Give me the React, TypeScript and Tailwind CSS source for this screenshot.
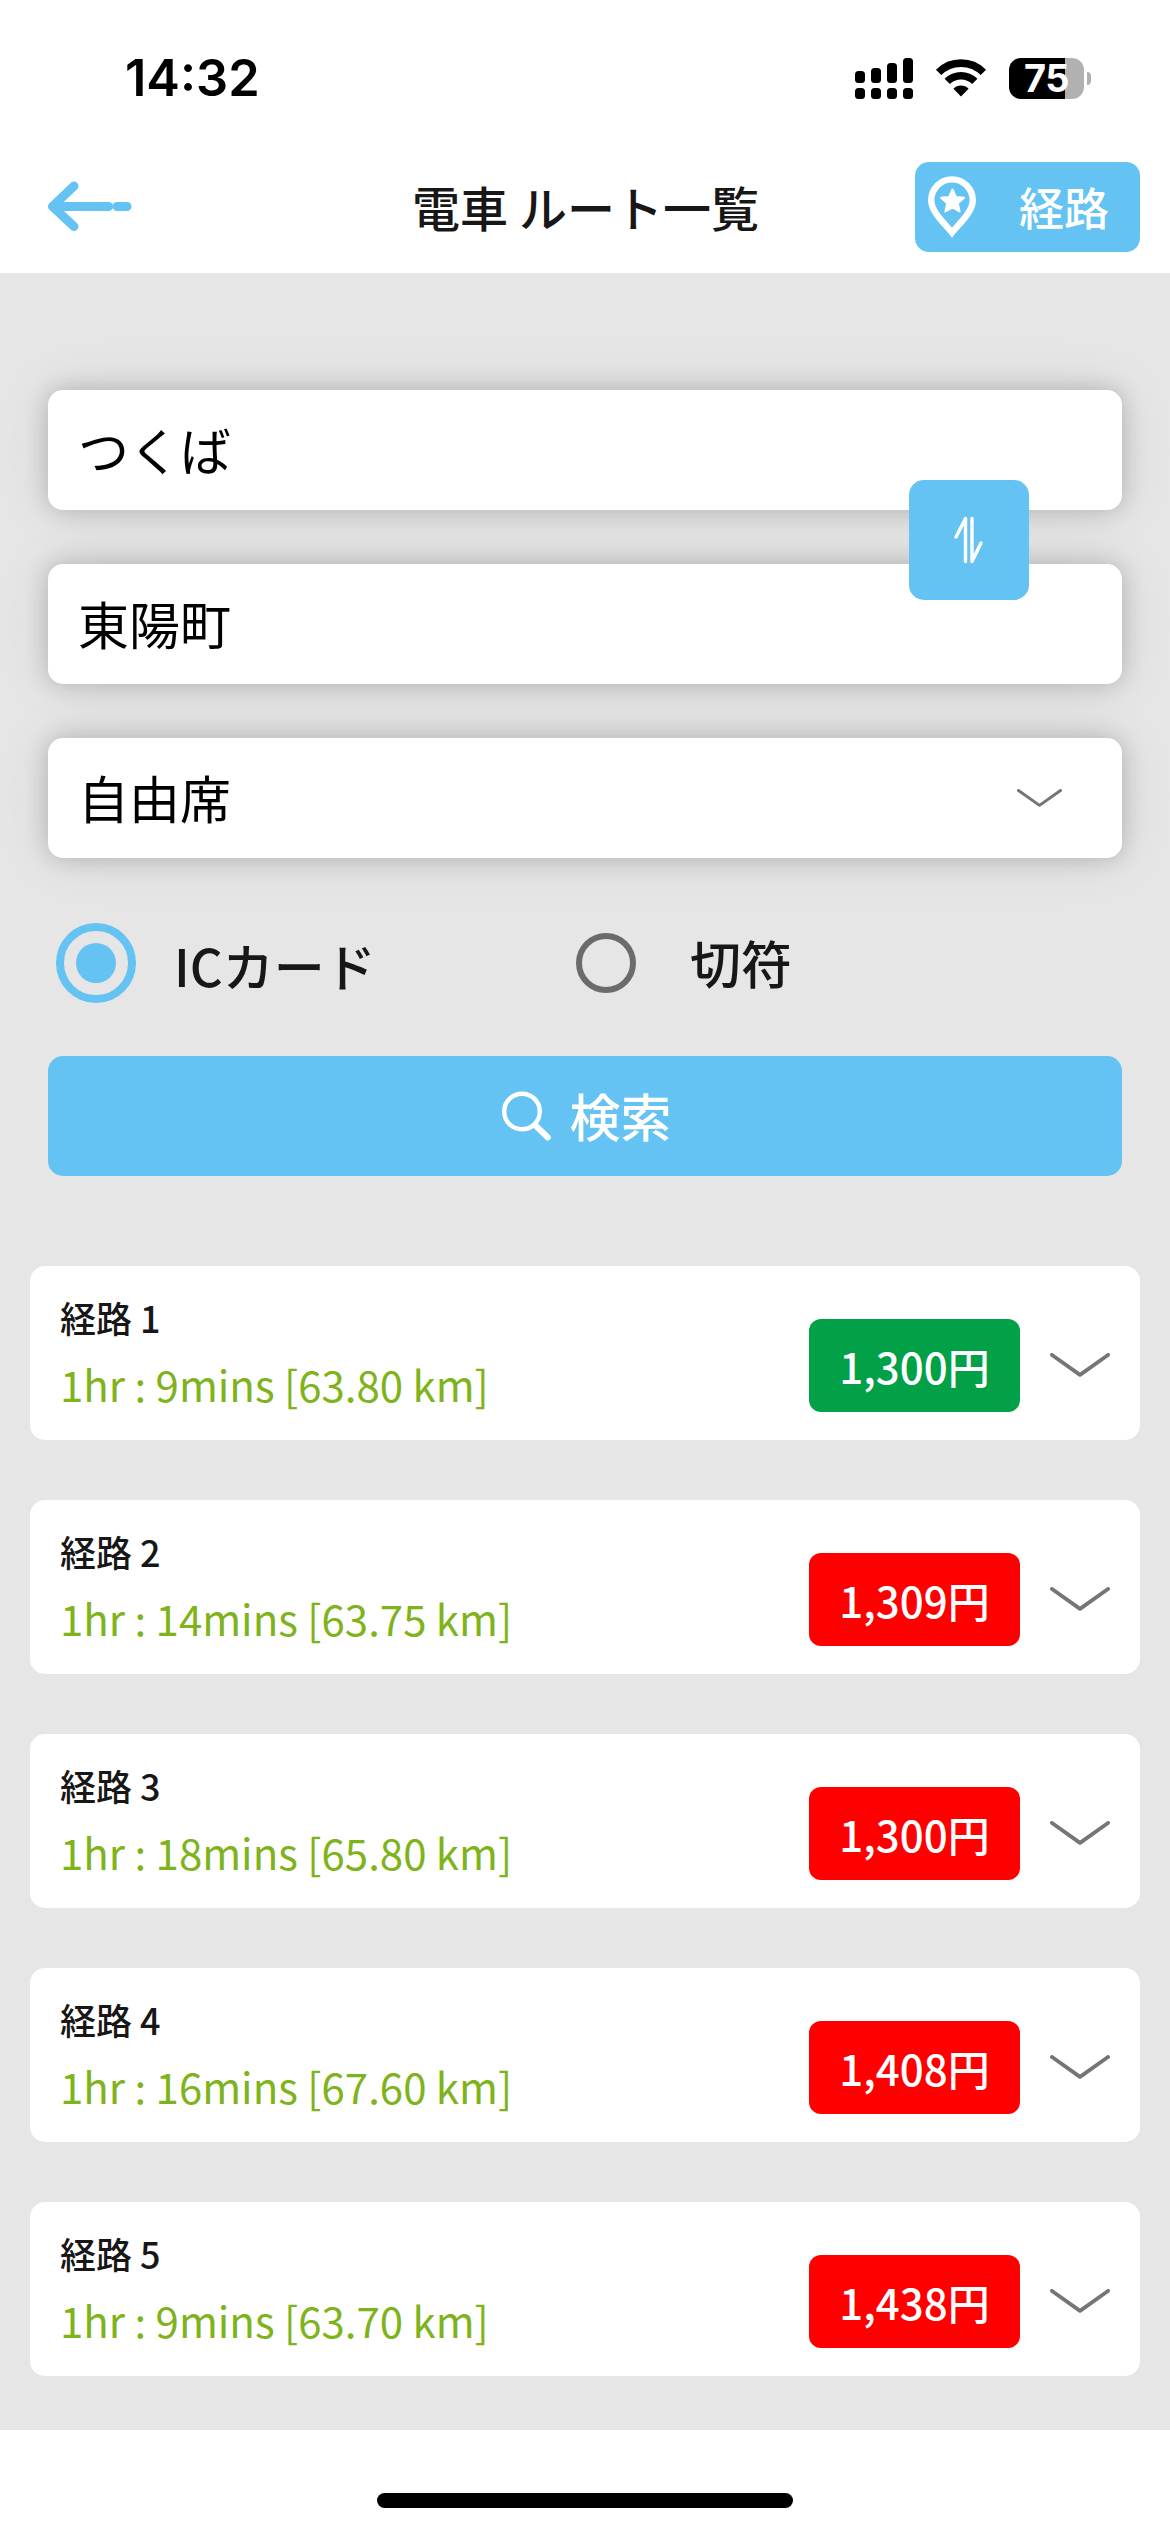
import { useState } from 'react'

type Route = {
  id: number
  duration: string
  fare: string
  isCheapest: boolean
}

const ROUTES: Route[] = [
  { id: 1, duration: '1hr : 9mins [63.80 km]', fare: '1,300円', isCheapest: true },
  { id: 2, duration: '1hr : 14mins [63.75 km]', fare: '1,309円', isCheapest: false },
  { id: 3, duration: '1hr : 18mins [65.80 km]', fare: '1,300円', isCheapest: false },
  { id: 4, duration: '1hr : 16mins [67.60 km]', fare: '1,408円', isCheapest: false },
  { id: 5, duration: '1hr : 9mins [63.70 km]', fare: '1,438円', isCheapest: false },
]

const FIELD_CLASS =
  'flex h-[120px] w-full items-center rounded-[15px] bg-white pb-px pl-[30px] text-[51px] leading-none text-black shadow-[0_0_24px_rgba(0,0,0,0.2),0_0_60px_rgba(0,0,0,0.08)]'

function SignalIcon() {
  return (
    <svg width="58" height="41" viewBox="0 0 58 41">
      <rect x="0" y="13" width="10" height="12" rx="3.5" />
      <rect x="16" y="10" width="10" height="15" rx="3.5" />
      <rect x="32" y="5" width="10" height="20" rx="3.5" />
      <rect x="48" y="0" width="10" height="25" rx="3.5" />
      <rect x="0" y="30" width="10" height="11" rx="3.5" />
      <rect x="16" y="30" width="10" height="11" rx="3.5" />
      <rect x="32" y="30" width="10" height="11" rx="3.5" />
      <rect x="48" y="30" width="10" height="11" rx="3.5" />
    </svg>
  )
}

function WifiIcon() {
  return (
    <svg width="52" height="38" viewBox="0 0 52 38">
      <path d="M3.6 13.4a31.6 31.6 0 0 1 44.8 0" fill="none" stroke="#000" strokeWidth="7.6" />
      <path d="M12.2 22.4a19.5 19.5 0 0 1 27.6 0" fill="none" stroke="#000" strokeWidth="7.4" />
      <path d="M26 37.5l-7.6-7.8a10.8 10.8 0 0 1 15.2 0z" />
    </svg>
  )
}

function BatteryIcon() {
  return (
    <div className="flex items-center gap-[3px]">
      <div className="flex h-[41px] w-[75px] items-center justify-center rounded-[12px] bg-[linear-gradient(to_right,#000_56px,#b1b1b1_56px)]">
        <span className="font-['Inter'] text-[38px] leading-[41px] font-bold tracking-[-0.5px] text-white">
          75
        </span>
      </div>
      <div className="h-[13px] w-[4px] rounded-r-full bg-[#b1b1b1]" />
    </div>
  )
}

function StatusBar() {
  return (
    <div className="flex h-[156px] items-center justify-between pr-[79px] pl-[125px]">
      <span className="font-['Inter'] text-[50.5px] leading-none font-semibold text-black">14:32</span>
      <div className="flex items-center gap-[22px]">
        <SignalIcon />
        <WifiIcon />
        <BatteryIcon />
      </div>
    </div>
  )
}

function BackIcon() {
  return (
    <svg
      width="84"
      height="56"
      viewBox="0 0 84 56"
      fill="none"
      stroke="#64c3f2"
      strokeLinecap="round"
      strokeLinejoin="round"
      strokeWidth="9"
    >
      <path d="M26 8L4.5 28.5L26 48.5" />
      <path d="M5 28.5H60.5" />
      <path d="M69 28.5H79" />
    </svg>
  )
}

function PinIcon() {
  return (
    <svg width="48" height="62" viewBox="0 0 48 62">
      <path
        d="M24 56.5C18.500 49.500 3.200 36.500 3.200 24.200a20.800 20.800 0 0 1 41.600 0C44.800 36.500 29.500 49.500 24 56.500z"
        fill="none"
        stroke="#fff"
        strokeWidth="6.4"
      />
      <path
        d="M24.500 13.500l3.300 7.500 8.200.8-6.200 5.500 1.800 8.200-7.100-4.200-7.100 4.200 1.800-8.200-6.200-5.500 8.200-.8z"
        fill="#fff"
        stroke="#fff"
        strokeLinejoin="round"
        strokeWidth="2"
      />
    </svg>
  )
}

function SwapIcon() {
  return (
    <svg
      width="30"
      height="48"
      viewBox="0 0 30 48"
      fill="none"
      stroke="#fff"
      strokeLinecap="round"
      strokeLinejoin="round"
      strokeWidth="3.4"
    >
      <path d="M2 21L11.500 2.500V45.500" />
      <path d="M18 2.500V45.500L27 27" />
    </svg>
  )
}

function SearchIcon() {
  return (
    <svg width="49" height="50" viewBox="0 0 49 50" fill="none" stroke="#fff">
      <circle cx="20" cy="20.500" r="17.800" strokeWidth="4.400" />
      <path d="M33.500 34.500L45.800 46.500" strokeWidth="6" strokeLinecap="round" />
    </svg>
  )
}

function ChevronDown({ className }: { className: string }) {
  return (
    <svg
      className={className}
      viewBox="0 0 60 24"
      fill="none"
      stroke="#757575"
      strokeLinecap="round"
      strokeLinejoin="round"
      strokeWidth="3.900"
    >
      <path d="M2 2L30 21.800L58 2" />
    </svg>
  )
}

function Header() {
  return (
    <header className="grid h-[117px] grid-cols-[1fr_auto_1fr] items-start pr-[30px] pl-12">
      <button className="mt-[22px] justify-self-start">
        <BackIcon />
      </button>
      <h1 className="mt-[26px] mr-[17px] text-[48px] leading-none font-medium text-[#171717]">
        電車 ルート一覧
      </h1>
      <button className="mt-[6px] flex h-[90px] w-[225px] items-center justify-self-end rounded-[14px] bg-[#64c3f2] pl-[13px] text-white">
        <PinIcon />
        <span className="mb-px ml-[43px] text-[45px] leading-none font-medium">経路</span>
      </button>
    </header>
  )
}

function RouteCard({ route }: { route: Route }) {
  return (
    <li className="flex h-[174px] justify-between rounded-[15px] bg-white px-[30px]">
      <div className="pt-[32px]">
        <p className="text-[36px] leading-[38px] font-medium text-[#171717]">経路 {route.id}</p>
        <p className="mt-[24px] text-[42px] leading-[48px] text-[#7eb31b]">{route.duration}</p>
      </div>
      <div className="mt-[53px] flex h-[93px] items-center gap-[30px]">
        <span
          className={`flex h-[93px] w-[211px] items-center justify-center rounded-[12px] text-[42px] leading-none font-medium text-white ${
            route.isCheapest ? 'bg-[#02a047]' : 'bg-[#ff0000]'
          }`}
        >
          {route.fare}
        </span>
        <ChevronDown className="mb-[2px] h-[24px] w-[60px]" />
      </div>
    </li>
  )
}

export default function App() {
  const [payment, setPayment] = useState<'ic' | 'ticket'>('ic')

  return (
    <div className="flex h-[2532px] w-[1170px] flex-col bg-white font-['Noto_Sans_CJK_JP',sans-serif]">
      <StatusBar />
      <Header />

      <main className="h-[2157px] bg-[#e6e6e6] pt-[117px]">
        <section className="px-12">
          <div className="relative flex flex-col gap-[54px]">
            <div className={FIELD_CLASS}>つくば</div>
            <div className={FIELD_CLASS}>東陽町</div>
            <button className="absolute top-[90px] right-[93px] flex size-[120px] items-center justify-center rounded-[15px] bg-[#64c3f2]">
              <SwapIcon />
            </button>
            <div className={FIELD_CLASS}>
              <span className="flex-1">自由席</span>
              <ChevronDown className="mr-[60px] h-[18px] w-[45px]" />
            </div>
          </div>

          <div className="mt-[65px] flex h-[80px] items-center pl-[8px] text-[51px] leading-none font-medium text-[#171717]">
            <button
              className="flex size-[80px] items-center justify-center rounded-full border-[8px] border-[#64c3f2]"
              onClick={() => setPayment('ic')}
            >
              {payment === 'ic' && <span className="size-[40px] rounded-full bg-[#64c3f2]" />}
            </button>
            <span className="mt-[5px] ml-[38px] w-[402px]">ICカード</span>
            <button
              className="flex size-[60px] items-center justify-center rounded-full border-[6px] border-[#6b6b6b]"
              onClick={() => setPayment('ticket')}
            >
              {payment === 'ticket' && <span className="size-[30px] rounded-full bg-[#6b6b6b]" />}
            </button>
            <span className="mb-px ml-[54px]">切符</span>
          </div>

          <button className="mt-[53px] flex h-[120px] w-full items-center justify-center gap-[18px] rounded-[15px] bg-[#64c3f2] pl-[4px] text-[51px] leading-none font-medium text-white">
            <SearchIcon />
            <span className="mb-px">検索</span>
          </button>
        </section>

        <ul className="mt-[90px] flex flex-col gap-[60px] px-[30px]">
          {ROUTES.map((route) => (
            <RouteCard key={route.id} route={route} />
          ))}
        </ul>
      </main>

      <footer className="flex flex-1 justify-center pt-[63px]">
        <div className="h-[15px] w-[416px] rounded-full bg-black" />
      </footer>
    </div>
  )
}
